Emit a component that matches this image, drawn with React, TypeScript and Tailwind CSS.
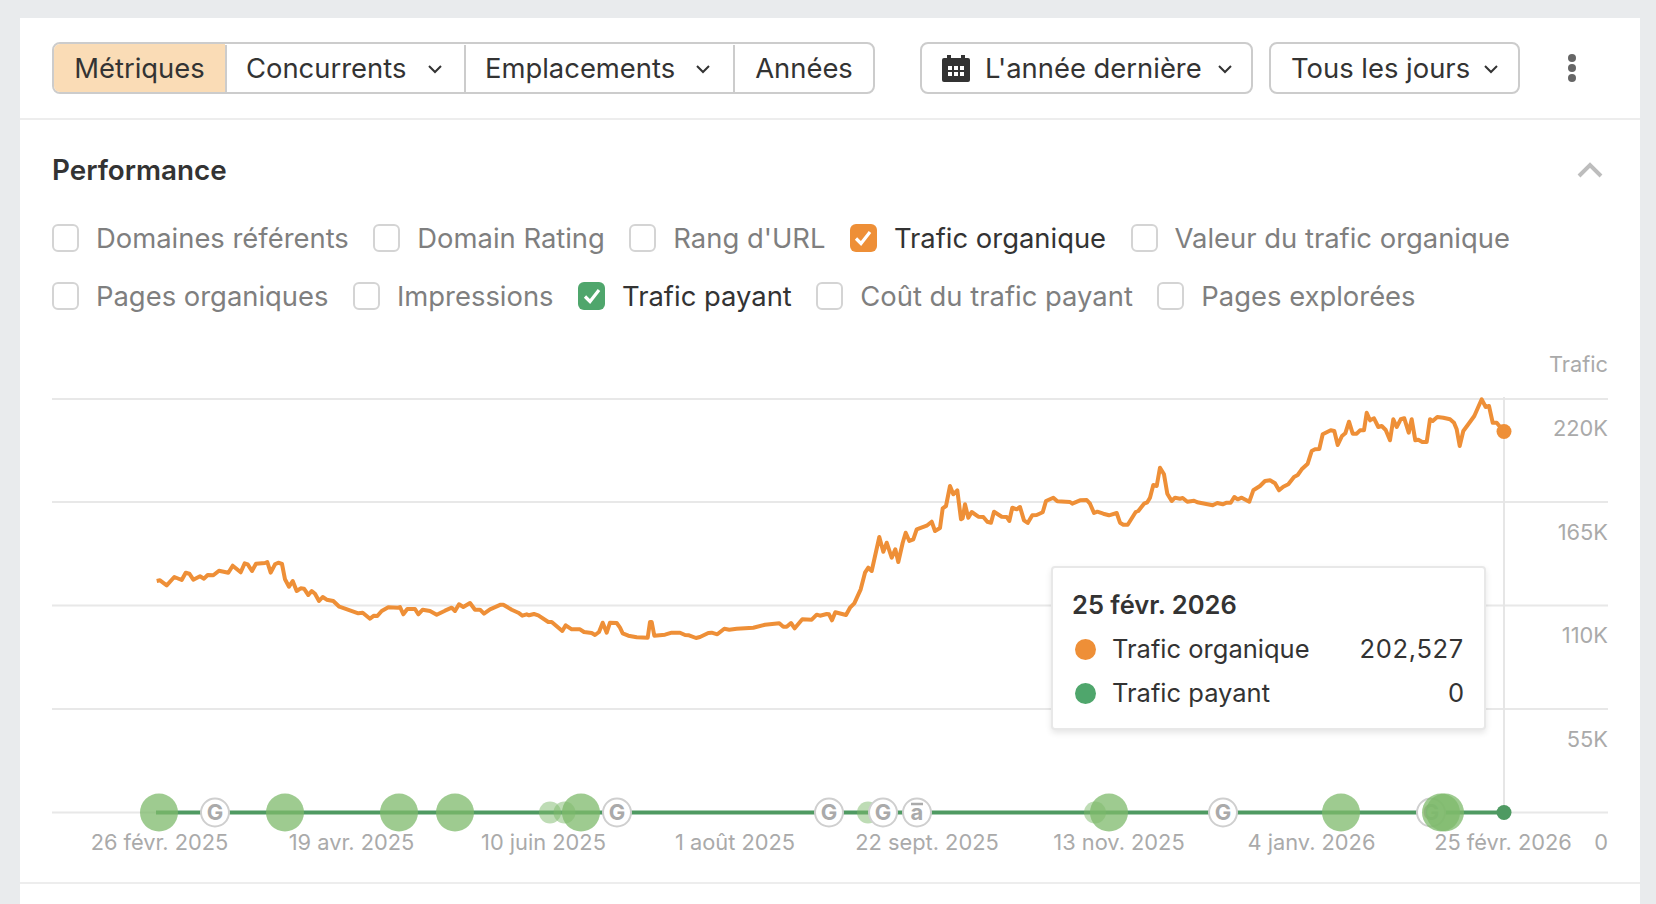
import React from 'react';

const FONT = 'font-["Inter",sans-serif]';

// traced from the chart, in px relative to each crop origin x3
const segA: number[][] = [[80,180],[90,178],[110,193],[133,168],[155,177],[167,155],[178,158],[190,176],[210,166],[222,173],[233,162],[250,163],[267,149],[295,155],[308,134],[332,154],[344,127],[353,130],[366,150],[378,128],[405,126],[412,123],[422,155],[435,130],[445,125],[456,129],[465,175],[477,197],[488,180],[500,210],[512,202],[522,203],[535,222],[545,210],[555,218],[567,240],[578,228],[590,236],[610,240],[628,257],[645,263],[685,277],[698,275],[720,293],[732,284],[742,285],[755,270],[775,259],[805,260],[810,258],[820,280],[832,264],[855,264],[865,280],[878,266],[900,270],[920,281],[945,269],[965,260],[975,270],[987,250],[1000,258],[1020,246],[1035,266],[1050,266],[1062,278],[1080,265],[1112,251],[1120,251],[1145,266],[1165,275],[1177,284],[1190,280],[1197,283],[1212,279],[1225,283],[1255,303],[1265,303],[1280,316],[1297,330],[1307,313],[1325,325],[1350,325],[1362,333],[1385,336],[1395,342],[1407,333]];
const segB: number[][] = [[-52,575],[-40,605],[-30,575],[-10,576],[0,590],[8,607],[25,614],[50,619],[83,620],[90,573],[95,573],[103,614],[135,611],[155,605],[180,605],[195,612],[207,613],[228,621],[240,618],[265,606],[275,605],[292,610],[313,593],[328,596],[350,593],[400,590],[435,581],[478,577],[490,587],[500,587],[513,576],[524,592],[547,565],[575,566],[590,551],[600,554],[620,549],[627,550],[636,568],[646,544],[678,552],[690,530],[703,517],[722,475],[735,425],[745,410],[755,420],[778,318],[790,362],[800,335],[815,380],[826,355],[835,393],[848,335],[857,305],[868,330],[880,325],[890,295],[920,284],[935,272],[945,300],[960,291],[968,232],[978,225],[990,165],[1000,190],[1012,178],[1023,265],[1028,262],[1035,220],[1045,260],[1055,243],[1075,257],[1090,258],[1102,272],[1113,275],[1122,242],[1145,257],[1160,258],[1168,270],[1177,230],[1190,235],[1200,228],[1212,268],[1223,276],[1237,253],[1250,252],[1268,244],[1278,210],[1300,200],[1312,211],[1350,213]];
const segC: number[][] = [[97,398],[120,388],[140,387],[150,398],[162,426],[172,422],[190,428],[207,433],[230,426],[240,455],[250,461],[263,461],[287,423],[295,420],[312,398],[322,394],[330,380],[340,342],[350,345],[360,290],[372,310],[382,368],[395,390],[405,380],[420,383],[428,381],[442,392],[462,389],[472,394],[518,403],[532,396],[548,400],[560,395],[572,395],[583,378],[593,385],[605,380],[628,392],[640,358],[660,345],[675,330],[690,328],[705,337],[717,358],[730,347],[745,340],[762,318],[773,312],[785,295],[803,278],[815,240],[825,235],[838,234],[848,190],[872,178],[883,180],[893,222],[906,195],[916,187],[927,152],[938,188],[950,188],[960,178],[972,178],[980,125],[990,148],[1002,142],[1015,168],[1025,165],[1037,177],[1050,208],[1060,145],[1070,168],[1082,145],[1093,142],[1106,185],[1115,145],[1126,208],[1135,206],[1147,213],[1160,213],[1170,145],[1178,150],[1192,138],[1210,140],[1230,145],[1242,155],[1250,175],[1259,225],[1270,180],[1285,160],[1303,135],[1325,85],[1337,108],[1347,105],[1358,155],[1370,155],[1392,182]];

const toPts = (seg: number[][], ox: number, oy: number) =>
  seg.map(([x, y]) => `${(ox + x / 3).toFixed(1)},${(oy + y / 3).toFixed(1)}`).join(' ');

const trace = [toPts(segA, 130, 520), toPts(segB, 620, 430), toPts(segC, 1040, 370)].join(' ');

const gridY = [398, 501, 604.5, 708, 811.5];
const yLabels = [
  { y: 428, t: '220K' },
  { y: 532, t: '165K' },
  { y: 635, t: '110K' },
  { y: 739, t: '55K' },
];
const xLabels = [
  { x: 159.5, t: '26 févr. 2025' },
  { x: 351.5, t: '19 avr. 2025' },
  { x: 543.5, t: '10 juin 2025' },
  { x: 735, t: '1 août 2025' },
  { x: 927, t: '22 sept. 2025' },
  { x: 1119, t: '13 nov. 2025' },
  { x: 1311.5, t: '4 janv. 2026' },
  { x: 1503, t: '25 févr. 2026' },
];
const smallDots = [550, 564.5, 868, 1095];
const bigDots = [159, 285, 399, 455, 581, 1109, 1341, 1441, 1445];

const Chevron = () => (
  <svg width="16" height="10" viewBox="0 0 16 10" fill="none" className="shrink-0">
    <path d="M2 2 8 8 14 2" stroke="#333" strokeWidth="2" />
  </svg>
);

const CalendarIcon = () => (
  <svg width="28" height="27" viewBox="0 0 28 27" className="shrink-0">
    <rect x="0" y="3" width="28" height="24" rx="2" fill="#333" />
    <rect x="5" y="0" width="4" height="5" fill="#333" />
    <rect x="19" y="0" width="4" height="5" fill="#333" />
    {[6, 12, 18].map((x) => (
      <React.Fragment key={x}>
        <rect x={x} y="11" width="4" height="4" fill="#fff" />
        <rect x={x} y="17" width="4" height="4" fill="#fff" />
      </React.Fragment>
    ))}
  </svg>
);

const Check = ({ label, color }: { label: string; color?: 'orange' | 'green' }) => (
  <div className="flex items-center gap-[17px]">
    {color ? (
      <span
        className={`w-[27px] h-[28px] rounded-md flex items-center justify-center ${color === 'orange' ? 'bg-[#ee8f37]' : 'bg-[#4fa66c]'}`}
      >
        <svg width="20" height="20" viewBox="0 0 20 20" fill="none">
          <path d="M3 10.5 8 15.5 17 4" stroke="#fff" strokeWidth="3.2" />
        </svg>
      </span>
    ) : (
      <span className="w-[27px] h-[28px] rounded-md border-2 border-[#d4d4d4] bg-white" />
    )}
    <span className={`text-[27.4px] leading-[34px] ${color ? 'text-[#333]' : 'text-[#7f7f7f]'}`}>{label}</span>
  </div>
);

const Badge = ({ x, t }: { x: number; t: string }) => (
  <g>
    <circle cx={x} cy={811.5} r={14} fill="#fff" stroke="#cfcfcf" strokeWidth="2" />
    <text x={x} y={819} textAnchor="middle" fontSize="22" fontWeight="700" fill="#aaa">
      {t}
    </text>
    {t === 'a' && <line x1={x - 6} x2={x + 6} y1="803" y2="803" stroke="#aaa" strokeWidth="2.5" />}
  </g>
);

export default function App() {
  return (
    <div className={`h-screen overflow-hidden bg-[#e9ebed] pt-[18px] pl-[20px] ${FONT}`}>
      <div className="w-[1620px] h-[886px] bg-white">
        {/* toolbar */}
        <div className="h-[102px] border-b-2 border-[#ededed] pl-[32px] pt-[24px] flex items-start">
          <div className="flex h-[52px] w-[823px] border-2 border-[#cccccc] rounded-lg overflow-hidden pt-px text-[27.4px] text-[#333]">
            <div className="w-[171px] -mt-px bg-[#fadcb6] flex items-center justify-center pt-px">Métriques</div>
            <div className="w-[239px] border-l-2 border-[#cccccc] flex items-center pl-[19px] gap-[21px]">
              Concurrents <Chevron />
            </div>
            <div className="w-[269px] border-l-2 border-[#cccccc] flex items-center pl-[19px] gap-[20px]">
              Emplacements <Chevron />
            </div>
            <div className="flex-1 border-l-2 border-[#cccccc] flex items-center justify-center">Années</div>
          </div>
          <div className="ml-[45px] h-[52px] w-[333px] border-2 border-[#cccccc] rounded-lg flex items-center pl-[20px] gap-[15px] pt-px text-[27.4px] text-[#333]">
            <CalendarIcon /> L'année dernière <Chevron />
          </div>
          <div className="ml-[16px] h-[52px] w-[251px] border-2 border-[#cccccc] rounded-lg flex items-center pl-[20px] gap-[13px] pt-px text-[27.4px] text-[#333]">
            Tous les jours <Chevron />
          </div>
          <div className="ml-[48px] h-[52px] flex flex-col items-center justify-center gap-[2px]">
            <span className="w-2 h-2 rounded-full bg-[#666]" />
            <span className="w-2 h-2 rounded-full bg-[#666]" />
            <span className="w-2 h-2 rounded-full bg-[#666]" />
          </div>
        </div>

        {/* metrics */}
        <div className="pl-[32px] pr-[37px]">
          <div className="flex items-center justify-between h-[36px] mt-[33px]">
            <h2 className="text-[27.8px] font-semibold text-[#333]">Performance</h2>
            <svg width="26" height="16" viewBox="0 0 26 16" fill="none" className="-mt-[2px]">
              <path d="M2 14 13 3 24 14" stroke="#bdbdbd" strokeWidth="4" />
            </svg>
          </div>
          <div className="flex items-center gap-[24.5px] mt-[32px] h-[34px]">
            <Check label="Domaines référents" />
            <Check label="Domain Rating" />
            <Check label="Rang d'URL" />
            <Check label="Trafic organique" color="orange" />
            <Check label="Valeur du trafic organique" />
          </div>
          <div className="flex items-center gap-[24.5px] mt-[24px] h-[34px]">
            <Check label="Pages organiques" />
            <Check label="Impressions" />
            <Check label="Trafic payant" color="green" />
            <Check label="Coût du trafic payant" />
            <Check label="Pages explorées" />
          </div>
        </div>

        {/* chart */}
        <div className="relative mt-[28px] h-[541px] border-b-2 border-[#ededed] box-content">
          <svg width="1620" height="541" viewBox="20 340 1620 541" className="block" fontFamily="Inter, sans-serif">
            {gridY.map((y) => (
              <line key={y} x1="52" x2="1608" y1={y} y2={y} stroke="#e8e8e8" strokeWidth="2" />
            ))}
            <line x1="1504" x2="1504" y1="396" y2="812" stroke="#e6e6e6" strokeWidth="2" />
            <text x="1608" y="371" textAnchor="end" fontSize="21.8" fill="#aaa">Trafic</text>
            {yLabels.map((l) => (
              <text key={l.t} x="1608" y={l.y + 7} textAnchor="end" fontSize="21.8" fill="#aaa">{l.t}</text>
            ))}
            {xLabels.map((l) => (
              <text key={l.t} x={l.x} y="849" textAnchor="middle" fontSize="21.8" fill="#aaa">{l.t}</text>
            ))}
            <text x="1608" y="849" textAnchor="end" fontSize="21.8" fill="#aaa">0</text>

            <polyline points={trace} fill="none" stroke="#ee8f37" strokeWidth="4" strokeLinejoin="round" />
            <circle cx="1504" cy="430.5" r="7.5" fill="#ee8f37" />

            <line x1="156" x2="1504" y1="811.5" y2="811.5" stroke="#4f9a62" strokeWidth="4" />
            <Badge x={215} t="G" />
            <Badge x={617} t="G" />
            <Badge x={829} t="G" />
            <Badge x={1223} t="G" />
            <Badge x={1431} t="G" />
            {smallDots.map((x) => (
              <circle key={x} cx={x} cy="811.5" r="11" fill="#7dba6b" opacity="0.5" />
            ))}
            {bigDots.map((x) => (
              <circle key={x} cx={x} cy="811.5" r="19" fill="#7dba6b" opacity="0.75" />
            ))}
            <Badge x={883} t="G" />
            <Badge x={917} t="a" />
            <circle cx="1504" cy="811.5" r="7.5" fill="#4f9a62" />
          </svg>

          {/* tooltip */}
          <div className="absolute left-[1031px] top-[225px] w-[435px] h-[164px] bg-white border-2 border-[#e8e8e8] rounded-[4px] shadow-[0_3px_6px_rgba(0,0,0,0.1)] pl-[19px] pr-[20px] pt-[19px] text-[25.5px] text-[#333]">
            <div className="font-semibold leading-[36px]">25 févr. 2026</div>
            <div className="flex items-center h-[44px] mt-[4px]">
              <span className="w-[21px] h-[21px] rounded-full bg-[#ee8f37] ml-[3px] mr-[16px]" />
              <span className="flex-1">Trafic organique</span>
              <span className="tracking-[0.7px]">202,527</span>
            </div>
            <div className="flex items-center h-[44px]">
              <span className="w-[21px] h-[21px] rounded-full bg-[#4fa66c] ml-[3px] mr-[16px]" />
              <span className="flex-1">Trafic payant</span>
              <span>0</span>
            </div>
          </div>
        </div>
      </div>
    </div>
  );
}
